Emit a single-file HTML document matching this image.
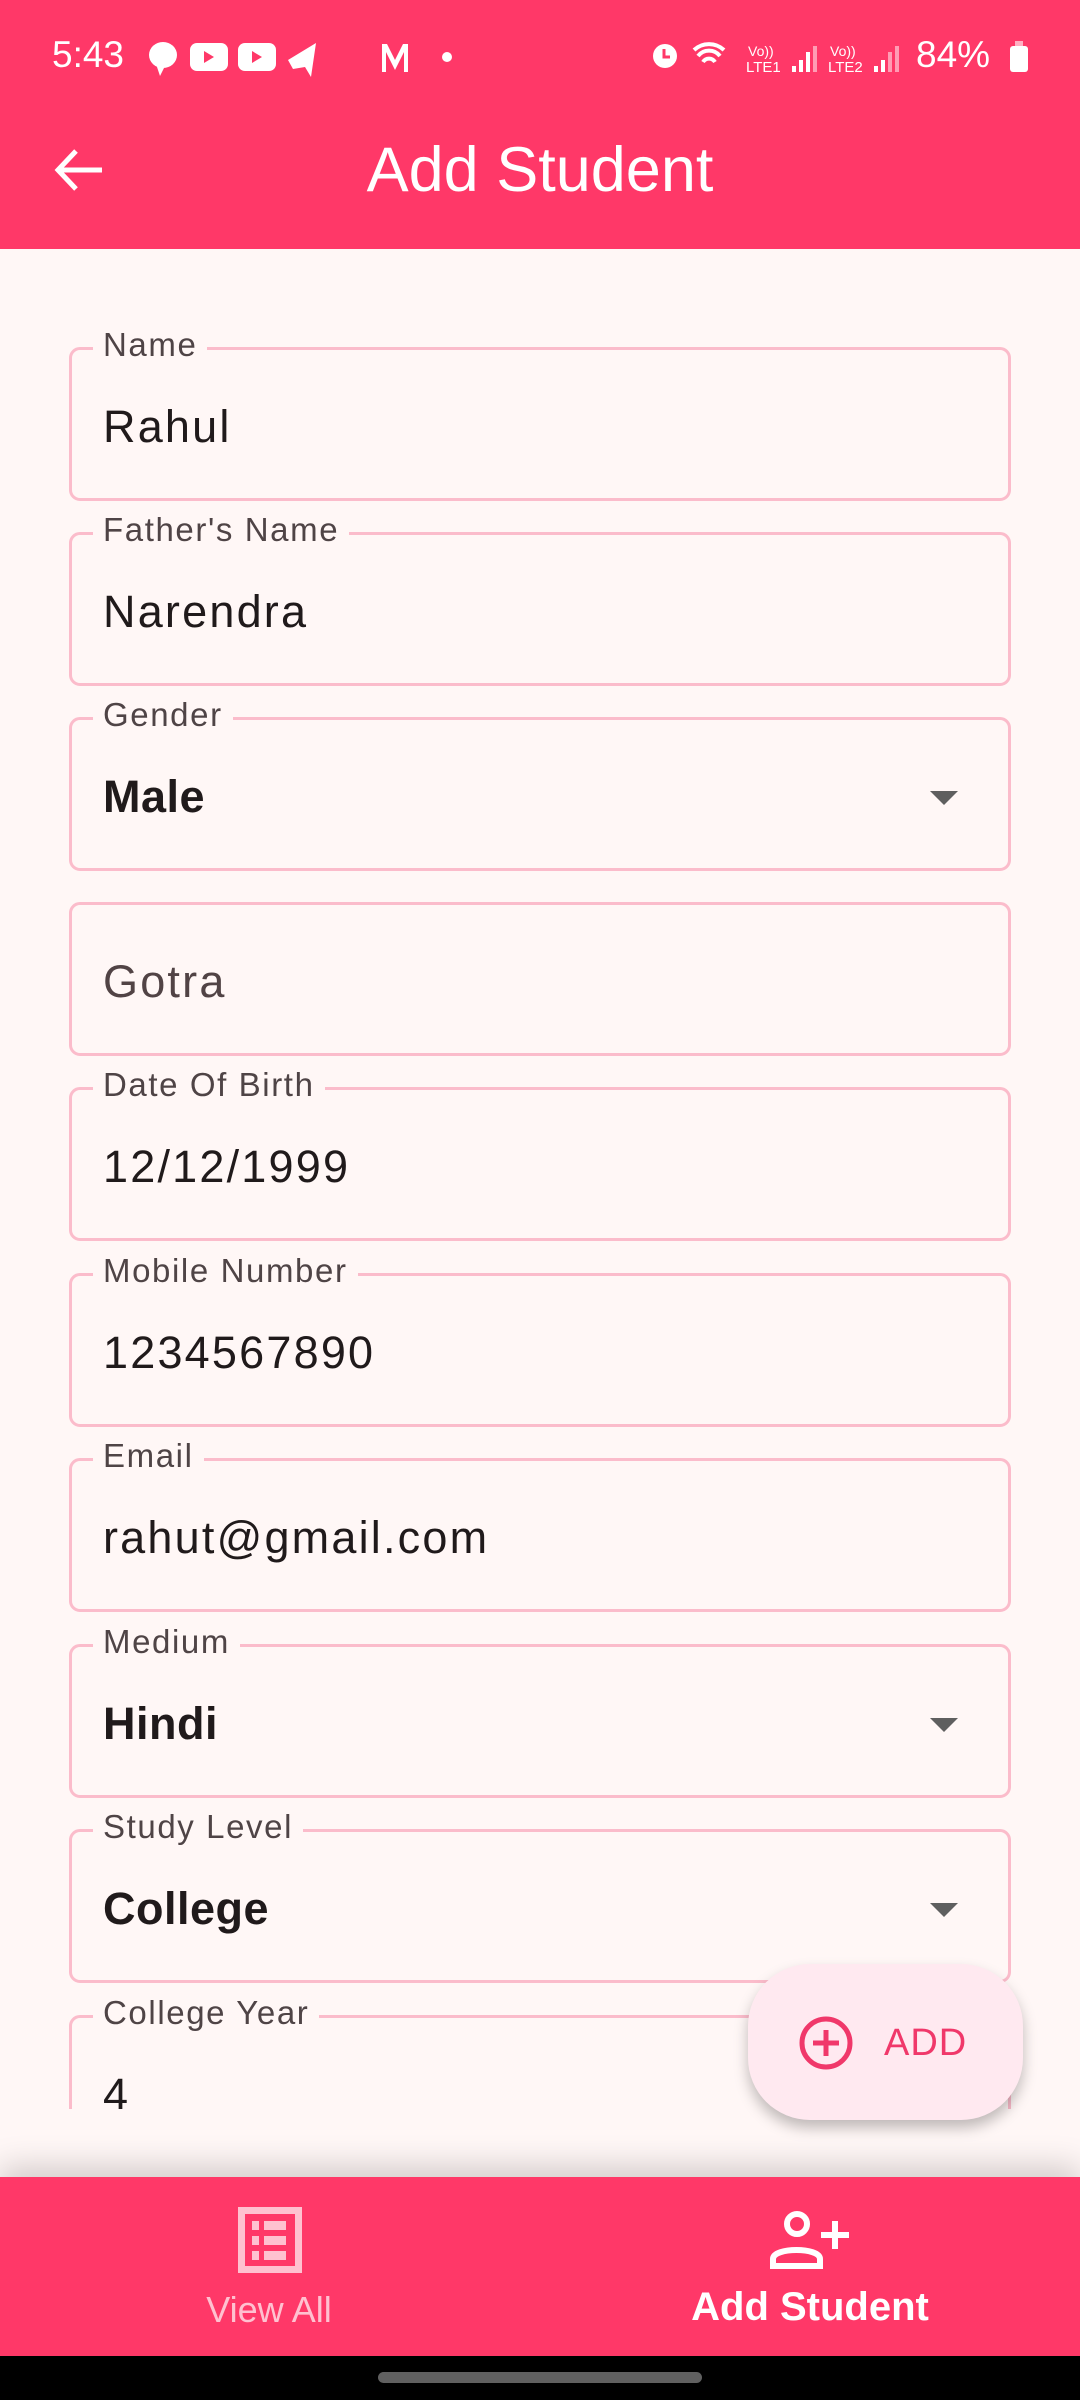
<!DOCTYPE html>
<html><head><meta charset="utf-8"><style>
*{margin:0;padding:0;box-sizing:border-box}
body{width:1080px;height:2400px;background:#fff7f6;font-family:"Liberation Sans",sans-serif;position:relative;overflow:hidden}
.top{position:absolute;left:0;top:0;width:1080px;height:249px;background:#ff3868}
.st{position:absolute;top:34px;color:#fff;font-size:37px}
.title{position:absolute;left:0;width:1080px;top:134px;text-align:center;color:#fff;font-size:63px}
.content{position:absolute;left:0;top:249px;width:1080px;height:1860px;overflow:hidden}
.f{position:absolute;left:69px;width:942px;height:154px;border:3px solid #fbbccb;border-radius:11px}
.lab{position:absolute;left:21px;top:-24px;background:#fff7f6;padding:0 10px;font-size:33px;color:#4f4446;letter-spacing:1.6px}
.val{position:absolute;left:31px;top:51px;font-size:45px;color:#201a1b;letter-spacing:2.2px}
.b{font-weight:bold;letter-spacing:0.5px}
.ph{color:#514345}
.tri{position:absolute;right:50px;top:71px;width:0;height:0;border-left:14px solid transparent;border-right:14px solid transparent;border-top:14px solid #5f5f5f}
.fab{position:absolute;left:748px;top:1964px;width:275px;height:156px;border-radius:62px;background:#ffe9f0;box-shadow:0 8px 14px rgba(0,0,0,.25)}
.nav{position:absolute;left:0;top:2177px;width:1080px;height:179px;background:#ff3868;box-shadow:0 -10px 30px rgba(0,0,0,.18)}
.sys{position:absolute;left:0;top:2356px;width:1080px;height:44px;background:#000}
</style></head><body>
<div class="top">
<div class="st" style="left:52px">5:43</div>
<svg style="position:absolute;left:146px;top:38px" width="320" height="40" viewBox="0 0 320 40" fill="#fff">
<ellipse cx="17" cy="17" rx="14" ry="13"/><path d="M10 26 l4 12 l5 -10z"/>
<rect x="44" y="5" width="38" height="28" rx="7"/><path d="M58 13 l10 6 l-10 6z" fill="#ff3868"/>
<rect x="92" y="5" width="38" height="28" rx="7"/><path d="M106 13 l10 6 l-10 6z" fill="#ff3868"/>
<path d="M142 22 l28 -17 l-5 34 l-6 -10 l-12 2z"/>
<path d="M236 6 h5 l8 16 l8 -16 h5 v28 h-4 v-20 l-9 18 l-9 -18 v20 h-4z"/>
<circle cx="301" cy="19" r="5"/>
</svg>
<svg style="position:absolute;left:648px;top:36px" width="380" height="40" viewBox="0 0 380 40" fill="#fff">
<circle cx="17" cy="20" r="12"/><path d="M16 13 v8 h6" stroke="#ff3868" stroke-width="3" fill="none"/>
<path d="M46 14 a22 22 0 0 1 30 0 M50 20 a14 14 0 0 1 22 0 M55 26 a7 7 0 0 1 12 0" stroke="#fff" stroke-width="4" fill="none"/>
<text x="100" y="20" font-size="14" font-family="Liberation Sans">Vo))</text><text x="98" y="36" font-size="15" font-family="Liberation Sans">LTE1</text>
<rect x="144" y="30" width="4" height="6"/><rect x="151" y="24" width="4" height="12"/><rect x="158" y="16" width="4" height="20"/><rect x="165" y="10" width="4" height="26" opacity=".5"/>
<text x="182" y="20" font-size="14" font-family="Liberation Sans">Vo))</text><text x="180" y="36" font-size="15" font-family="Liberation Sans">LTE2</text>
<rect x="226" y="30" width="4" height="6"/><rect x="233" y="24" width="4" height="12"/><rect x="240" y="16" width="4" height="20" opacity=".5"/><rect x="247" y="10" width="4" height="26" opacity=".5"/>
<rect x="362" y="10" width="18" height="26" rx="3"/><rect x="367" y="5" width="8" height="6" opacity=".6"/>
</svg>
<div class="st" style="left:916px">84%</div>
<svg style="position:absolute;left:54px;top:148px" width="50" height="44" viewBox="0 0 50 44"><path d="M4 22 H48 M22 3 L4 22 L22 41" stroke="#fff" stroke-width="5" fill="none"/></svg>
<div class="title">Add Student</div>
</div>
<div class="content">
<div class="f" style="top:98px"><div class="lab">Name</div><div class="val">Rahul</div></div>
<div class="f" style="top:283px"><div class="lab">Father's Name</div><div class="val">Narendra</div></div>
<div class="f" style="top:468px"><div class="lab">Gender</div><div class="val b">Male</div><div class="tri"></div></div>
<div class="f" style="top:653px"><div class="val ph">Gotra</div></div>
<div class="f" style="top:838px"><div class="lab">Date Of Birth</div><div class="val">12/12/1999</div></div>
<div class="f" style="top:1024px"><div class="lab">Mobile Number</div><div class="val">1234567890</div></div>
<div class="f" style="top:1209px"><div class="lab">Email</div><div class="val">rahut@gmail.com</div></div>
<div class="f" style="top:1395px"><div class="lab">Medium</div><div class="val b">Hindi</div><div class="tri"></div></div>
<div class="f" style="top:1580px"><div class="lab">Study Level</div><div class="val b">College</div><div class="tri"></div></div>
<div class="f" style="top:1766px"><div class="lab">College Year</div><div class="val">4</div></div>
</div>
<div class="fab">
<svg style="position:absolute;left:50px;top:51px" width="56" height="56" viewBox="0 0 56 56"><circle cx="28" cy="28" r="24" stroke="#f0386a" stroke-width="5" fill="none"/><path d="M28 15 V41 M15 28 H41" stroke="#f0386a" stroke-width="5"/></svg>
<div style="position:absolute;left:136px;top:58px;font-size:38px;color:#f0386a;letter-spacing:1px">ADD</div>
</div>
<div class="nav">
<svg style="position:absolute;left:238px;top:30px" width="64" height="66" viewBox="0 0 64 66" fill="#ffc1d0"><path d="M0 0 H64 V66 H0z M7 7 V59 H57 V7z" fill-rule="evenodd"/><rect x="14" y="14" width="7" height="9"/><rect x="26" y="14" width="22" height="9"/><rect x="14" y="29" width="7" height="9"/><rect x="26" y="29" width="22" height="9"/><rect x="14" y="44" width="7" height="9"/><rect x="26" y="44" width="22" height="9"/></svg>
<div style="position:absolute;left:169px;width:200px;text-align:center;top:112px;font-size:36px;color:#ffc1d0">View All</div>
<svg style="position:absolute;left:770px;top:32px" width="80" height="60" viewBox="0 0 80 60"><circle cx="27" cy="15" r="10" stroke="#fff" stroke-width="6" fill="none"/><path d="M3 57 V50 C3 38 50 38 50 50 V57 Z" stroke="#fff" stroke-width="6" fill="none"/><path d="M65 12 V40 M51 26 H79" stroke="#fff" stroke-width="6"/></svg>
<div style="position:absolute;left:640px;width:340px;text-align:center;top:108px;font-size:40px;color:#fff;font-weight:bold">Add Student</div>
</div>
<div class="sys"><div style="position:absolute;left:378px;top:16px;width:324px;height:11px;border-radius:6px;background:#606060"></div></div>
</body></html>
